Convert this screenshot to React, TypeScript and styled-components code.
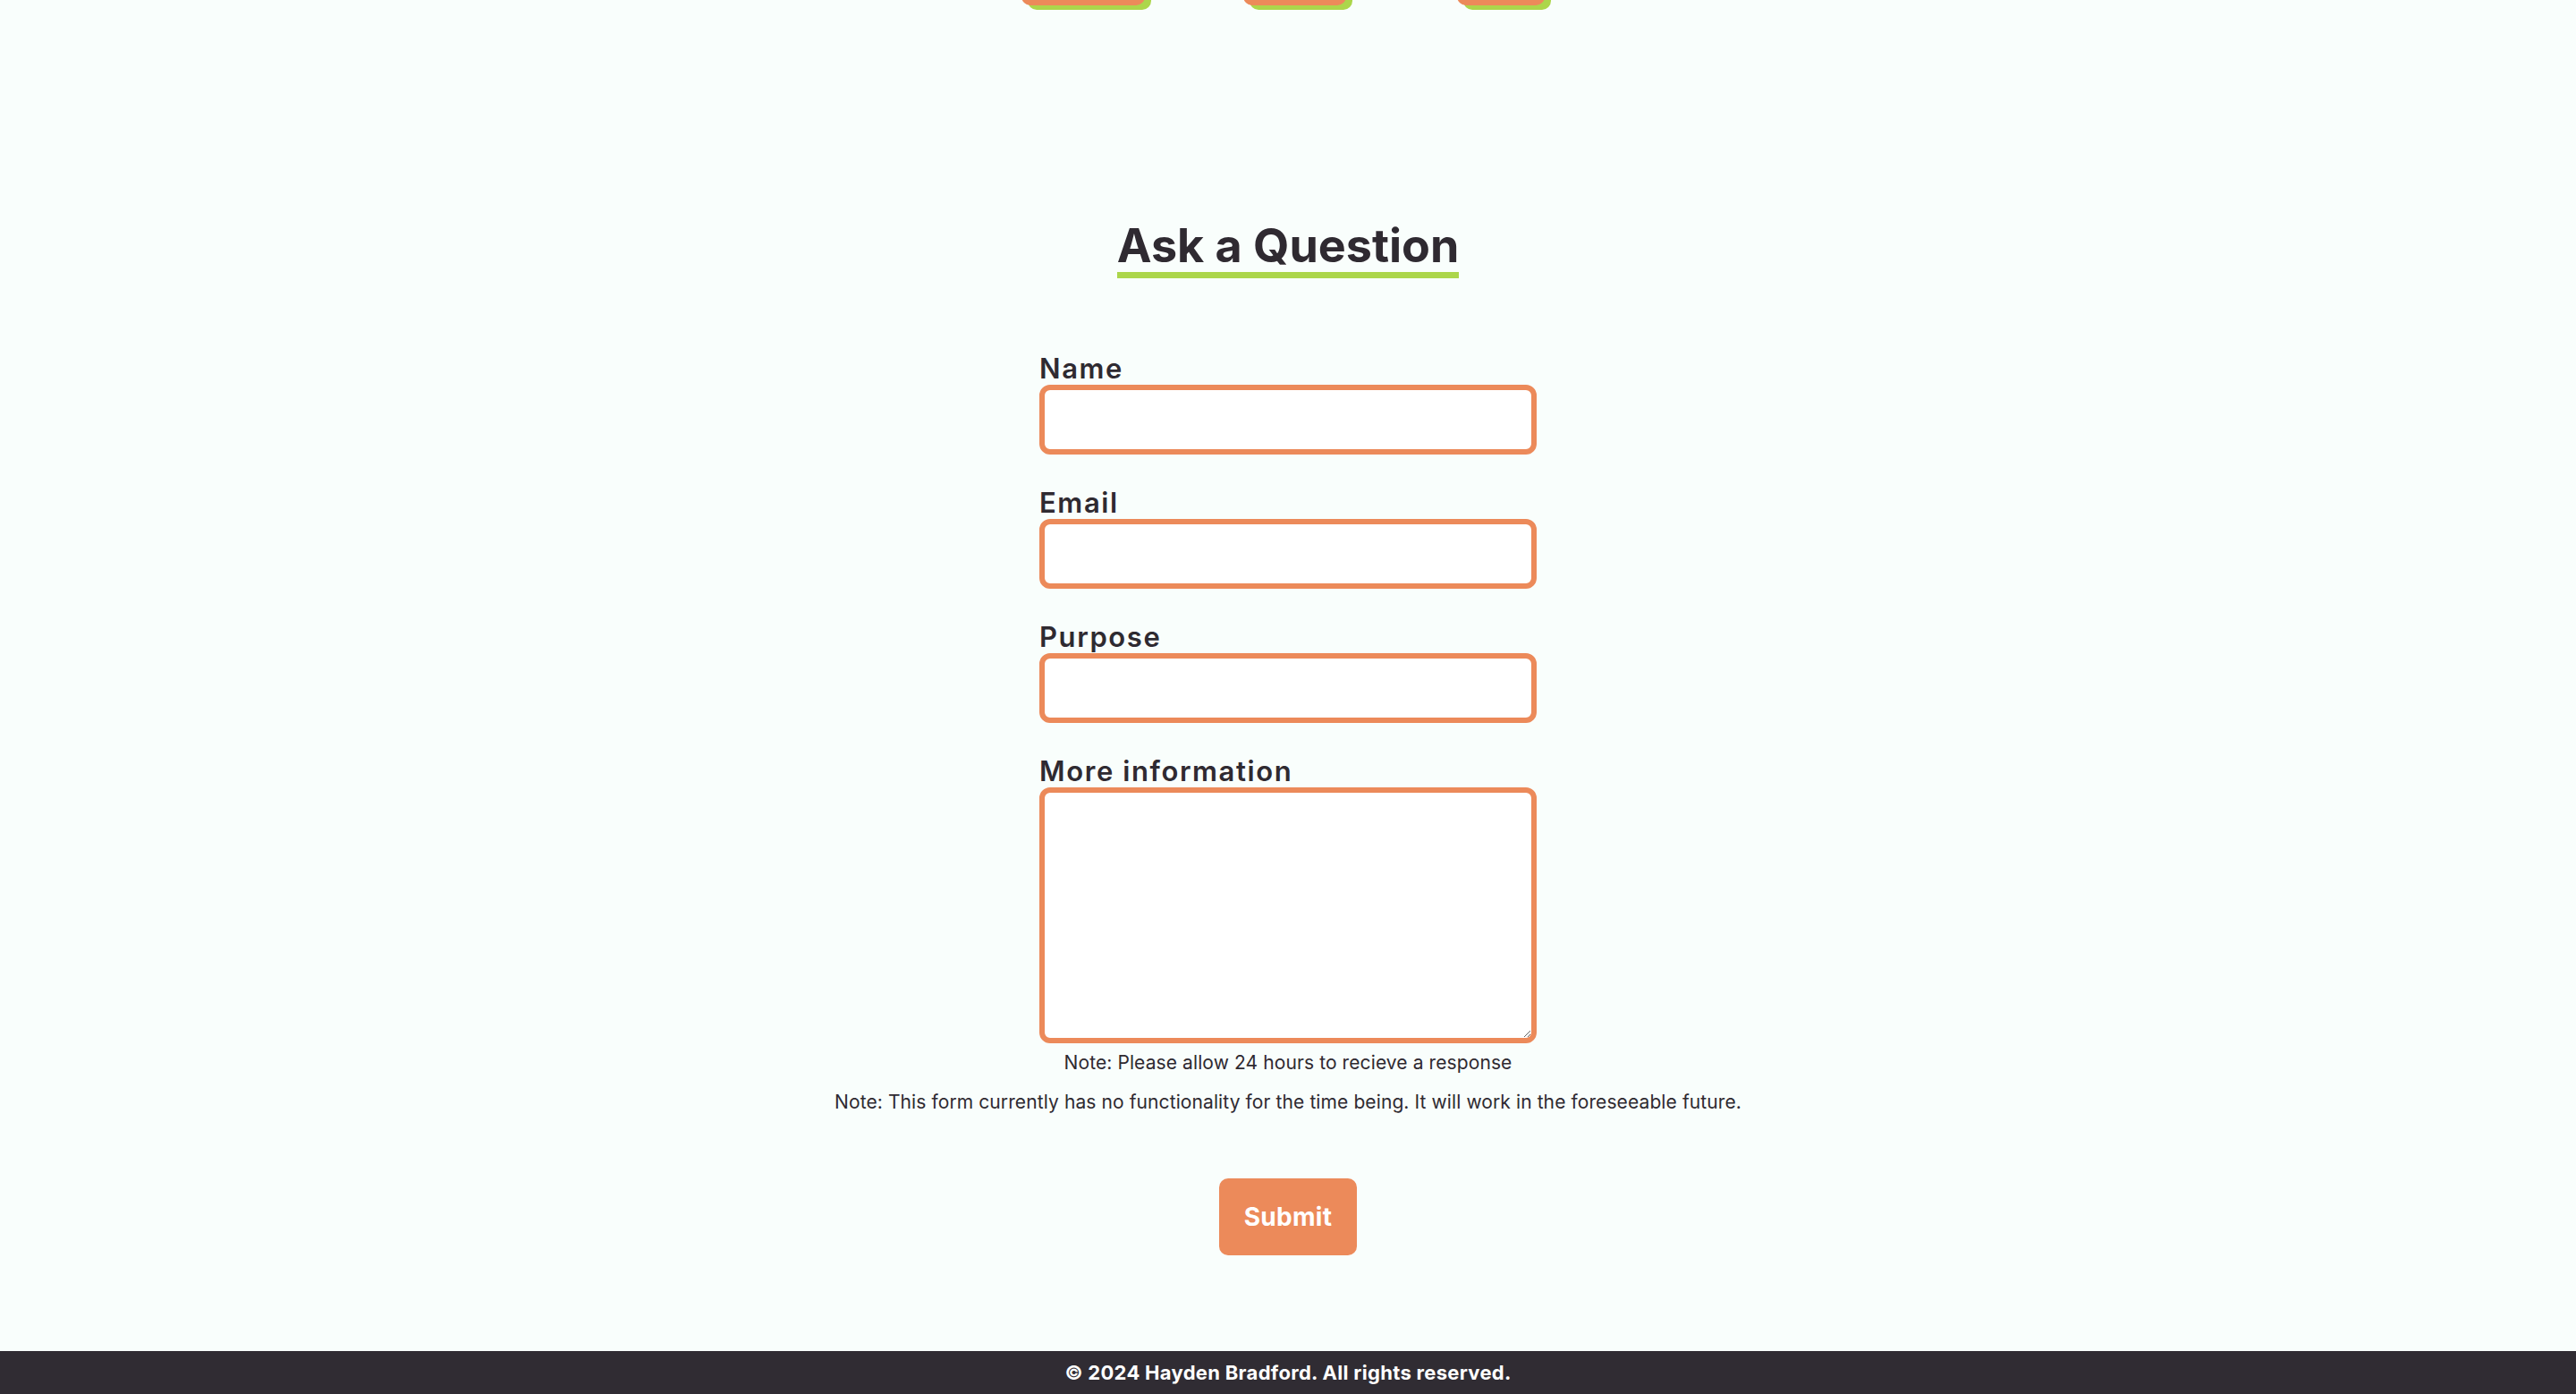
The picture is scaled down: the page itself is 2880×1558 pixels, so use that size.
import React from "react";
import styled, { createGlobalStyle } from "styled-components";

const ORANGE = "#ec8a5a";
const GREEN = "#acd64b";
const INK = "#2f2a31";
const BG = "#f9fefc";

const GlobalStyle = createGlobalStyle`
  html, body {
    margin: 0;
    padding: 0;
    background: ${BG};
  }
  body {
    font-family: Inter, "Open Sans", "DejaVu Sans", sans-serif;
    color: ${INK};
  }
  * { box-sizing: border-box; }
`;

const Page = styled.div`
  min-height: 100vh;
  display: flex;
  flex-direction: column;
  background: ${BG};
  overflow: hidden;
`;

const Nav = styled.nav`
  display: flex;
  justify-content: center;
  align-items: flex-end;
  height: 60px;
  margin-top: -54px;
  padding-right: 12px;
`;

const NavTab = styled.a<{ $w: number; $ml: number }>`
  display: block;
  width: ${(p) => p.$w}px;
  height: 60px;
  margin-left: ${(p) => p.$ml}px;
  background: ${ORANGE};
  border-radius: 10px;
  box-shadow: 7px 5px 0 ${GREEN};
`;

const Main = styled.main`
  display: flex;
  flex-direction: column;
  align-items: center;
`;

const Title = styled.h1`
  display: inline-block;
  margin: 239px 0 0;
  font-family: Inter, "DejaVu Sans", sans-serif;
  font-size: 52px;
  font-weight: 700;
  line-height: 59px;
  letter-spacing: 0;
  color: ${INK};
  border-bottom: 7px solid ${GREEN};
`;

const Form = styled.form`
  width: 556px;
  margin-top: 83px;
  display: flex;
  flex-direction: column;
  gap: 36px;
`;

const Field = styled.div`
  display: flex;
  flex-direction: column;
`;

const Label = styled.label`
  font-size: 31px;
  font-weight: 600;
  line-height: 36px;
  color: ${INK};
  letter-spacing: 1.6px;
`;

const TextInput = styled.input`
  width: 100%;
  height: 78px;
  border: 6px solid ${ORANGE};
  border-radius: 12px;
  background: #fff;
  outline: none;
  font-size: 24px;
  padding: 0 14px;
`;

const TextArea = styled.textarea`
  width: 100%;
  height: 286px;
  border: 6px solid ${ORANGE};
  border-radius: 12px;
  background: #fff;
  outline: none;
  font-size: 24px;
  padding: 10px 14px;
  display: block;
`;

const Note = styled.p<{ $mt: number }>`
  margin: ${(p) => p.$mt}px 0 0;
  font-size: 21px;
  line-height: 28px;
  font-weight: 400;
  letter-spacing: 0.1px;
  color: ${INK};
  text-align: center;
`;

const SubmitButton = styled.button`
  margin-top: 71px;
  width: 154px;
  height: 86px;
  border: none;
  border-radius: 10px;
  background: ${ORANGE};
  color: #fff;
  font-family: Inter, "DejaVu Sans", sans-serif;
  font-size: 28px;
  font-weight: 700;
  letter-spacing: 0.3px;
  cursor: pointer;
`;

const Footer = styled.footer`
  margin-top: auto;
  height: 48px;
  background: #302c33;
  color: #fff;
  display: flex;
  align-items: center;
  justify-content: center;
  font-size: 22px;
  font-weight: 700;
  letter-spacing: 0.3px;
`;

const fields = [
  { id: "name", label: "Name" },
  { id: "email", label: "Email" },
  { id: "purpose", label: "Purpose" },
];

export default function App() {
  return (
    <Page>
      <GlobalStyle />
      <Nav>
        <NavTab $w={138} $ml={0} aria-label="Home" />
        <NavTab $w={115} $ml={110} aria-label="Blog" />
        <NavTab $w={98} $ml={124} aria-label="Ask" />
      </Nav>
      <Main>
        <Title>Ask a Question</Title>
        <Form onSubmit={(e) => e.preventDefault()}>
          {fields.map((f) => (
            <Field key={f.id}>
              <Label htmlFor={f.id}>{f.label}</Label>
              <TextInput id={f.id} type={f.id === "email" ? "email" : "text"} />
            </Field>
          ))}
          <Field>
            <Label htmlFor="info">More information</Label>
            <TextArea id="info" />
          </Field>
        </Form>
        <Note $mt={8}>Note: Please allow 24 hours to recieve a response</Note>
        <Note $mt={16}>
          Note: This form currently has no functionality for the time being. It will work in the foreseeable future.
        </Note>
        <SubmitButton type="submit">Submit</SubmitButton>
      </Main>
      <Footer>© 2024 Hayden Bradford. All rights reserved.</Footer>
    </Page>
  );
}
